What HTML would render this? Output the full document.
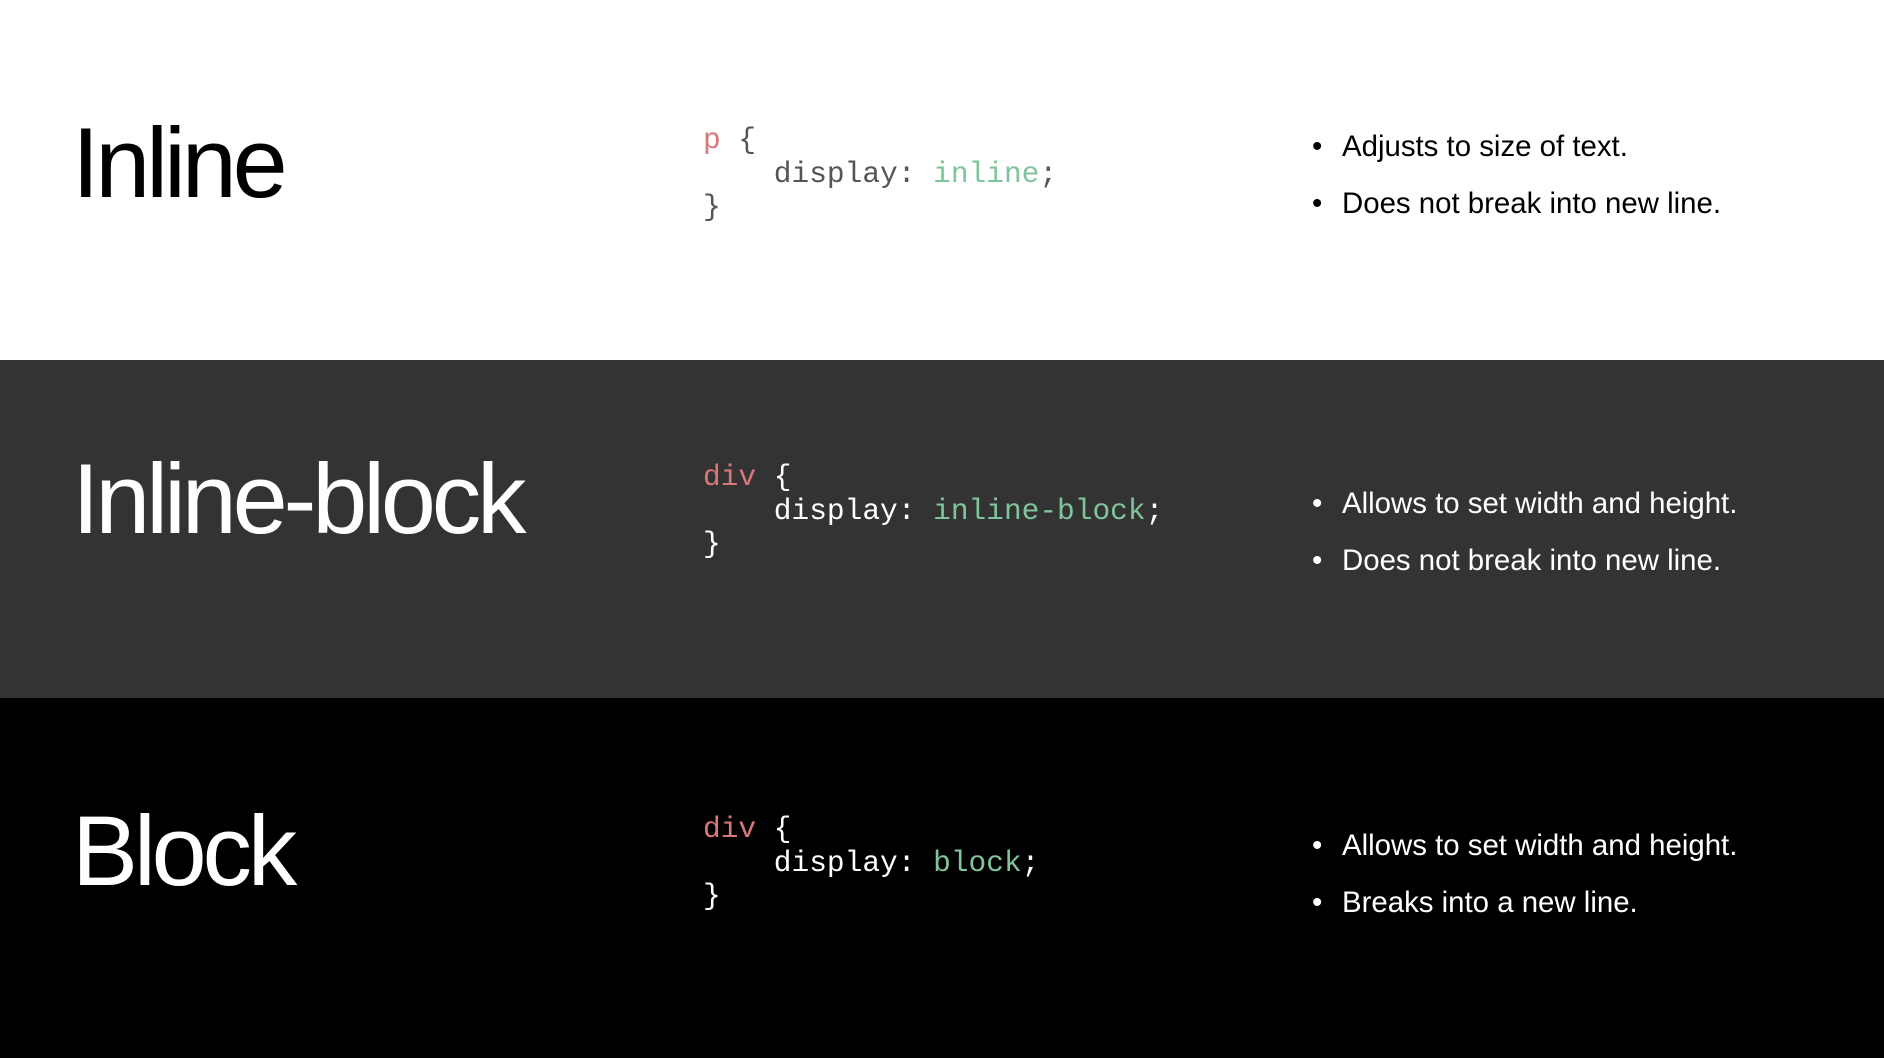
<!DOCTYPE html>
<html><head><meta charset="utf-8"><style>
body{margin:0;width:1884px;height:1058px;overflow:hidden;font-family:"Liberation Sans",sans-serif;position:relative}
.s{position:absolute;left:0;width:1884px}
.t{position:absolute;left:72px;font-size:99px;line-height:1;letter-spacing:-4.2px;white-space:nowrap}
.c{position:absolute;left:703px;font-family:"Liberation Mono",monospace;font-size:29.5px;line-height:33.6px;white-space:pre}
.r{color:#d9787b}.g{color:#80c49b}
.b{position:absolute;left:1312px;font-size:29.4px;line-height:57px;white-space:nowrap}
.b div::before{content:"•";display:inline-block;width:30px}
</style></head><body>
<div class="s" style="top:0;height:360px;background:#fff"></div>
<div class="s" style="top:360px;height:338px;background:#333"></div>
<div class="s" style="top:698px;height:360px;background:#000"></div>

<div class="t" style="top:113px;color:#000">Inline</div>
<div class="c" style="top:124px;color:#555"><span class="r">p</span> {
    display: <span class="g">inline</span>;
}</div>
<div class="b" style="top:118px;color:#000"><div>Adjusts to size of text.</div><div>Does not break into new line.</div></div>

<div class="t" style="top:449px;color:#fff">Inline-block</div>
<div class="c" style="top:461px;color:#fff"><span class="r">div</span> {
    display: <span class="g">inline-block</span>;
}</div>
<div class="b" style="top:475px;color:#fff"><div>Allows to set width and height.</div><div>Does not break into new line.</div></div>

<div class="t" style="top:801px;color:#fff">Block</div>
<div class="c" style="top:813px;color:#fff"><span class="r">div</span> {
    display: <span class="g">block</span>;
}</div>
<div class="b" style="top:817px;color:#fff"><div>Allows to set width and height.</div><div>Breaks into a new line.</div></div>
</body></html>
